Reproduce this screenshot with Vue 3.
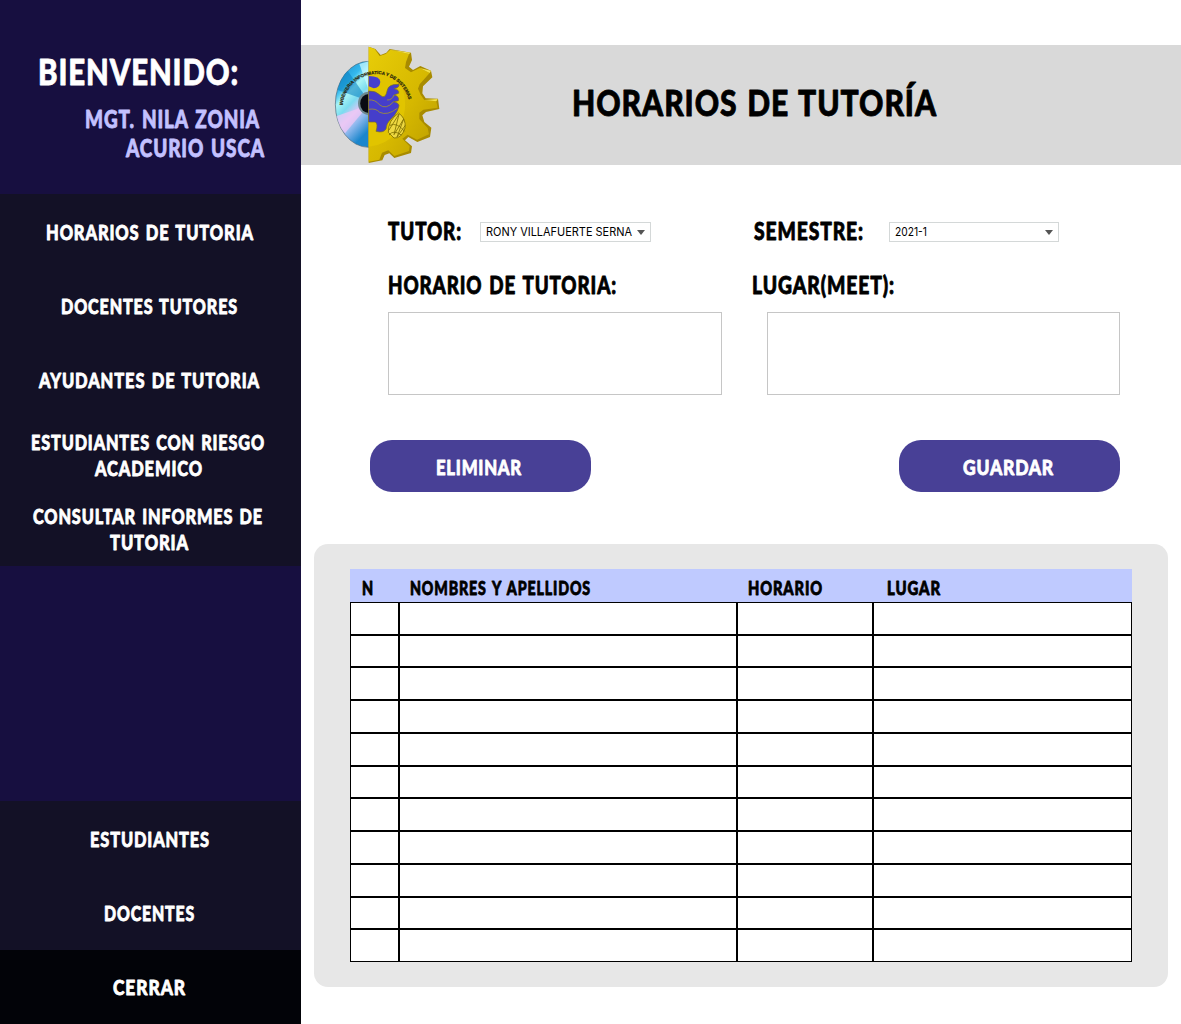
<script setup>
import { h } from 'vue'

// Display lettering: the box is exactly as tall as the capitals, baseline at the bottom.
const Lettering = (props) =>
  h(
    'svg',
    { class: 'lettering', width: props.width, height: props.cap },
    [
      h(
        'text',
        {
          x: 0,
          y: props.cap - 0.8,
          'font-size': props.cap / 0.73,
          textLength: props.width,
          lengthAdjust: 'spacingAndGlyphs'
        },
        props.text
      )
    ]
  )
Lettering.props = ['text', 'width', 'cap']

const menu = [
  [{ text: 'HORARIOS DE TUTORIA', width: 208 }],
  [{ text: 'DOCENTES TUTORES', width: 177 }],
  [{ text: 'AYUDANTES DE TUTORIA', width: 221 }],
  [
    { text: 'ESTUDIANTES CON RIESGO', width: 234 },
    { text: 'ACADEMICO', width: 108 }
  ],
  [
    { text: 'CONSULTAR INFORMES DE', width: 230 },
    { text: 'TUTORIA', width: 79 }
  ]
]
const footer = [
  { text: 'ESTUDIANTES', width: 120 },
  { text: 'DOCENTES', width: 91 },
  { text: 'CERRAR', width: 73, dark: true }
]
const columns = [
  { text: 'N', width: 12 },
  { text: 'NOMBRES Y APELLIDOS', width: 181 },
  { text: 'HORARIO', width: 75 },
  { text: 'LUGAR', width: 54 }
]
</script>

<template>
  <div class="page">
    <aside class="sidebar">
      <div class="welcome">
        <Lettering class="hello" text="BIENVENIDO:" :width="201" :cap="27" />
        <Lettering class="name first" text="MGT. NILA ZONIA" :width="175" :cap="17.5" />
        <Lettering class="name last" text="ACURIO USCA" :width="139" :cap="17.5" />
      </div>
      <nav class="menu">
        <a v-for="(lines, i) in menu" :key="i" class="item" :class="{ double: lines.length > 1 }">
          <Lettering v-for="l in lines" :key="l.text" :text="l.text" :width="l.width" :cap="15.5" />
        </a>
      </nav>
      <nav class="menu bottom">
        <a v-for="l in footer" :key="l.text" class="item" :class="{ dark: l.dark }">
          <Lettering :text="l.text" :width="l.width" :cap="15.5" />
        </a>
      </nav>
    </aside>

    <main class="content">
      <header class="banner">
        <svg class="logo" width="125" height="120" viewBox="0 15 375 360">
          <defs>
            <linearGradient id="disc" x1="0.1" y1="0" x2="0.5" y2="1">
              <stop offset="0" stop-color="#1687c9" />
              <stop offset="0.3" stop-color="#35b9ee" />
              <stop offset="0.42" stop-color="#a9f4f5" />
              <stop offset="0.55" stop-color="#7bdcf0" />
              <stop offset="0.68" stop-color="#d9c6f4" />
              <stop offset="0.8" stop-color="#8fb9ee" />
              <stop offset="1" stop-color="#1b86cc" />
            </linearGradient>
            <linearGradient id="gold" x1="0" y1="0" x2="1" y2="1">
              <stop offset="0" stop-color="#e8cd08" />
              <stop offset="0.55" stop-color="#d6b800" />
              <stop offset="1" stop-color="#b99b00" />
            </linearGradient>
          </defs>
          <path d="M131 64A100 129 0 0 0 131 322Z" fill="url(#disc)" stroke="#4b6678" stroke-width="2" />
          <path d="M131 183L38 150Q46 112 68 92Z" fill="#087ec0" opacity=".55" />
          <path d="M131 195L35 228Q42 260 60 280Z" fill="#f0c8f5" opacity=".75" />
          <path d="M131 64V150L103 72Z" fill="#d0fbff" opacity=".7" />
          <path d="M131 155A32 35 0 0 0 131 225Z" fill="#6d8990" />
          <path d="M131 162A25 28 0 0 0 131 219Z" fill="#080b12" />
          <path
            d="M131 20L151 27L167 45L184 38L194 27L258 38L261 60L252 80L264 90L286 78L318 92L322 112L294 139L292 160L302 175L339 176L343 207L303 216L292 226L298 246L319 263L315 291L277 306L250 291L240 301L261 319L258 339L208 354L193 340L179 345L172 361L131 369Z"
            fill="#a88b00"
          />
          <path
            d="M131 20L149 27L164 48L182 42L196 29L252 42L243 66L240 84L258 97L284 84L314 99L284 133L279 146L287 164L298 180L334 184L338 203L295 209L283 218L283 237L308 264L312 283L276 299L248 284L232 296L254 319L252 333L208 348L190 331L171 338L163 359L131 365Z"
            fill="url(#gold)"
          />
          <path d="M196 29L252 42L257 38ZM284 84L314 99L318 92ZM298 180L334 184L338 177Z" fill="#f3e24a" />
          <path d="M131 92Q205 92 232 145Q255 210 215 276Q185 315 131 320Z" fill="#e1c400" />
          <path d="M131 108Q166 108 166 126Q164 143 146 145L131 139Z" fill="#4740cf" />
          <path
            d="M131 153Q151 151 165 165Q181 181 187 150Q190 132 222 133Q224 143 207 146Q224 149 221 160L207 165Q224 169 220 182L206 185Q226 190 221 201L217 212Q211 226 196 239Q184 250 183 267Q175 280 153 274Q160 251 151 246L131 246Z"
            fill="#453ecb"
            stroke="#777022"
            stroke-width="2"
          />
          <g fill="none" stroke="#a3932f" stroke-width="2.5">
            <path d="M131 180Q151 178 163 194Q183 211 206 185" />
            <path d="M131 208Q153 204 164 217Q187 228 217 205" />
            <path d="M186 180Q201 181 207 165" />
          </g>
          <g fill="none" stroke="#807000" stroke-width="2.5">
            <path d="M190 277Q189 241 221 219Q244 236 240 264Q230 296 207 294Z" fill="#eed842" />
            <path d="M192 270L222 222L207 284L236 237L216 291L241 256M195 256Q216 246 239 274M192 285Q205 268 229 285" />
          </g>
          <path id="arc" d="M53 196A101 104 0 0 1 254 196" fill="none" />
          <text class="motto"><textPath href="#arc">INGENIERIA INFORMATICA Y DE SISTEMAS</textPath></text>
        </svg>
        <Lettering class="title" text="HORARIOS DE TUTORÍA" :width="365" :cap="26.5" />
      </header>

      <section class="form">
        <div class="col left">
          <div class="field">
            <Lettering text="TUTOR:" :width="74" :cap="17.5" />
            <div class="select tutor">
              <svg width="147" height="9"><text x="0" y="8" textLength="146" lengthAdjust="spacingAndGlyphs">RONY VILLAFUERTE SERNA</text></svg>
              <i class="caret"></i>
            </div>
          </div>
          <Lettering class="label" text="HORARIO DE TUTORIA:" :width="229" :cap="17.5" />
          <div class="area"></div>
        </div>
        <div class="col right">
          <div class="field">
            <Lettering text="SEMESTRE:" :width="110" :cap="17.5" />
            <div class="select semester">
              <svg width="33" height="9"><text x="0" y="8" textLength="32" lengthAdjust="spacingAndGlyphs">2021-1</text></svg>
              <i class="caret"></i>
            </div>
          </div>
          <Lettering class="label" text="LUGAR(MEET):" :width="143" :cap="17.5" />
          <div class="area"></div>
        </div>
      </section>

      <div class="actions">
        <button><Lettering text="ELIMINAR" :width="86" :cap="15.5" /></button>
        <button><Lettering text="GUARDAR" :width="91" :cap="15.5" /></button>
      </div>

      <section class="panel">
        <div class="row head">
          <div v-for="c in columns" :key="c.text" class="th">
            <Lettering :text="c.text" :width="c.width" :cap="13.5" />
          </div>
        </div>
        <div class="body">
          <div v-for="r in 11" :key="r" class="row">
            <div v-for="c in 4" :key="c" class="td"></div>
          </div>
        </div>
      </section>
    </main>
  </div>
</template>

<style>
body {
  margin: 0;
  background: #fff;
}
</style>

<style scoped>
.page {
  display: flex;
  width: 1181px;
  height: 1024px;
  overflow: hidden;
  font-family: Lato, "Open Sans", sans-serif;
  color: #000;
}
.lettering {
  display: block;
  flex: none;
  overflow: visible;
  fill: currentColor;
  stroke: currentColor;
  stroke-width: 0.8px;
  stroke-linejoin: round;
  font-weight: 900;
  letter-spacing: 0.07em;
  word-spacing: 0.12em;
}
.sidebar {
  display: flex;
  flex-direction: column;
  flex: none;
  width: 301px;
  background: #170f40;
  color: #fff;
}
.welcome {
  box-sizing: border-box;
  height: 194px;
  padding-top: 59px;
}
.hello {
  margin-left: 38px;
}
.name {
  color: #c3c1ff;
}
.first {
  margin: 24.5px 0 0 85px;
}
.last {
  margin: 11.5px 0 0 126px;
}
.menu {
  display: flex;
  flex-direction: column;
}
.bottom {
  margin-top: auto;
}
.item {
  box-sizing: border-box;
  display: flex;
  flex-direction: column;
  align-items: center;
  justify-content: center;
  gap: 10.5px;
  height: 74.33px;
  padding: 2.6px 2px 0 0;
  background: #131126;
}
.double {
  padding-right: 6px;
}
.double .lettering + .lettering {
  margin-left: 3px;
}
.dark {
  background: #020308;
}
.content {
  flex: 1;
  padding-top: 45px;
}
.banner {
  display: flex;
  align-items: center;
  height: 120px;
  background: #d9d9d9;
}
.logo {
  margin-left: 24px;
}
.motto {
  font-family: "Liberation Sans Narrow", "Liberation Sans", sans-serif;
  font-weight: 700;
  font-size: 13.5px;
  fill: #28250c;
  stroke: #28250c;
  stroke-width: 0.6px;
}
.title {
  margin: -4px 0 0 122px;
}
.form {
  display: flex;
  padding: 57px 61px 0 87px;
}
.left {
  width: 334px;
}
.right {
  width: 353px;
  margin-left: 45px;
}
.field {
  display: flex;
  align-items: center;
  height: 20px;
}
.right .field {
  margin-left: -13px;
}
.label {
  margin-top: 34.5px;
}
.right .label {
  margin-left: -15px;
}
.select {
  box-sizing: border-box;
  display: flex;
  align-items: center;
  justify-content: space-between;
  height: 20px;
  padding: 0 5px;
  border: 1px solid #d4d8d8;
}
.select svg {
  overflow: visible;
  font: 400 11.2px Inter, sans-serif;
}
.tutor {
  width: 171px;
  margin-left: 18px;
}
.semester {
  width: 170px;
  margin-left: 25px;
}
.caret {
  border: 4.5px solid transparent;
  border-top: 5px solid #555;
  border-bottom: 0;
}
.area {
  box-sizing: border-box;
  height: 83px;
  margin-top: 18.4px;
  border: 1px solid #c6c6c6;
}
.actions {
  display: flex;
  justify-content: space-between;
  padding: 44.6px 61px 0 69px;
}
button {
  display: flex;
  align-items: center;
  justify-content: center;
  width: 221px;
  height: 52px;
  padding: 3px 3px 0 0;
  border: 0;
  border-radius: 22px;
  background: #484096;
  color: #fff;
  font-family: inherit;
}
button + button {
  padding-right: 2px;
}
.panel {
  box-sizing: border-box;
  width: 854px;
  height: 443px;
  margin: 52px 0 0 13px;
  padding: 25px 36px;
  border-radius: 14px;
  background: #e7e7e7;
}
.row {
  display: grid;
  grid-template-columns: 49px 338px 136px 259px;
}
.head {
  height: 33px;
  background: #bfcaff;
}
.th {
  padding: 13px 0 0 11px;
}
.th:first-child {
  padding-left: 12px;
}
.th:last-child {
  padding-left: 14px;
}
.body {
  display: grid;
  grid-template-rows: repeat(11, 1fr);
  height: 360px;
  background: #fff;
}
.td {
  border: 1px solid #000;
}
</style>
